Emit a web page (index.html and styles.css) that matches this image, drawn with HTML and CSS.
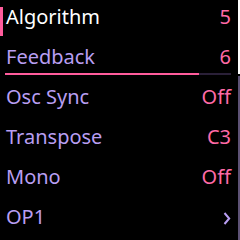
FILE: index.html
```html
<!DOCTYPE html>
<html lang="en">

<head>
    <meta charset="UTF-8">
    <title>Menu</title>
    <link rel="stylesheet" href="styles.css">
</head>

<body>
    <div class="screen">
        <!-- 菜单列表 -->
        <ul class="menu">
            <li class="item active">
                <div class="line"><span class="label">Algorithm</span><span class="value">5</span></div>
            </li>
            <li class="item">
                <div class="line"><span class="label">Feedback</span><span class="value">6</span></div>
                <div class="bar"><div class="fill" style="width: 85.7%"></div></div>
            </li>
            <li class="item">
                <div class="line"><span class="label">Osc Sync</span><span class="value">Off</span></div>
            </li>
            <li class="item">
                <div class="line"><span class="label">Transpose</span><span class="value">C3</span></div>
            </li>
            <li class="item">
                <div class="line"><span class="label">Mono</span><span class="value">Off</span></div>
            </li>
            <li class="item">
                <div class="line">
                    <span class="label">OP1</span>
                    <svg class="arrow" width="8" height="13" viewBox="0 0 8 13">
                        <polyline points="1.5,1 6.2,6.5 1.5,12" fill="none" stroke="#b89ef2" stroke-width="2" />
                    </svg>
                </div>
            </li>
        </ul>

        <!-- 滚动条 -->
        <div class="scroll">
            <div class="thumb"></div>
            <div class="track"></div>
        </div>
    </div>
</body>

</html>
```

FILE: styles.css
```css
* {
    margin: 0;
    padding: 0;
}

li {
    list-style: none;
}

body {
    background: #000;
    font-family: "Noto Sans", "DejaVu Sans", sans-serif;
    font-size: 20px;
}

.screen {
    width: 240px;
    height: 240px;
    display: flex;
    overflow: hidden;
}

.menu {
    width: 238px;
}

.menu .item {
    height: 40px;
    position: relative;
    padding: 0 7px 0 6px;
}

.menu .item .line {
    height: 33px;
    line-height: 33px;
    display: flex;
    justify-content: space-between;
    align-items: center;
}

.menu .item .label {
    color: #b89ef2;
}

.menu .item .value {
    color: #ff6aa6;
}

.menu .item .arrow {
    margin-top: 3px;
}

/* 选中项 */
.menu .active .label {
    color: #fff;
}

.menu .active::before {
    content: "";
    position: absolute;
    left: 0;
    top: 7px;
    width: 3px;
    height: 29px;
    background: #ff5c9c;
}

/* 进度条 */
.menu .item .bar {
    height: 2px;
    margin-left: -1px;
    background: #2a2038;
}

.menu .item .bar .fill {
    height: 2px;
    background: #ff5c9c;
}

.scroll {
    width: 2px;
    display: flex;
    flex-direction: column;
    gap: 2px;
}

.scroll .thumb {
    height: 74px;
    background: #fff;
}

.scroll .track {
    flex: 1;
    background: #5d5275;
}
```
